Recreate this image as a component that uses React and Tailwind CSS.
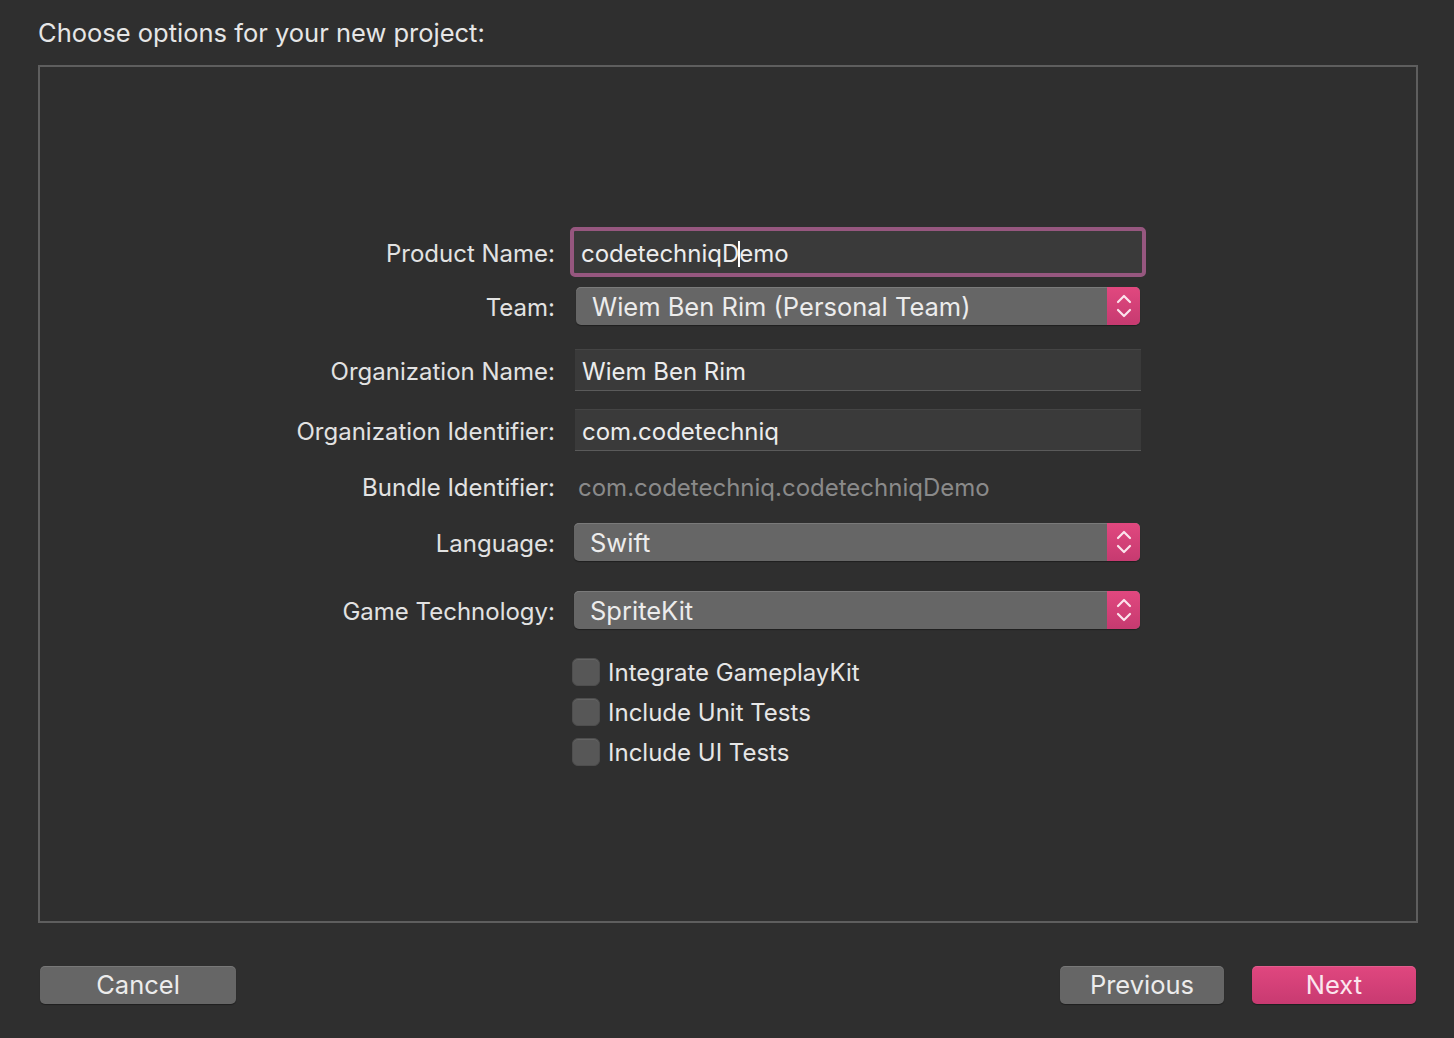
import React from "react";

const Stepper = () => (
    <div className="w-[33px] self-stretch rounded-r-[5px] bg-gradient-to-b from-[#e1487f] to-[#c63a70] flex items-center justify-center">
        <svg width="18" height="30" viewBox="0 0 18 30" fill="none" stroke="#fbe3ec" strokeWidth="2.2" strokeLinecap="round" strokeLinejoin="round">
            <path d="M3 11 L9 5 L15 11" />
            <path d="M3 19 L9 25 L15 19" />
        </svg>
    </div>
);

const Popup = ({ value, width = "w-[566px]" }) => (
    <div className={`flex h-[38px] ${width} rounded-[5px] bg-[#666666] shadow-[inset_0_1px_0_#7a7a7a,0_1px_1px_rgba(0,0,0,0.35)]`}>
        <div className="flex-1 flex items-center pl-[16px] pt-[2px] leading-[30px] text-[25.5px] text-[#ececec]">
            {value}
        </div>
        <Stepper />
    </div>
);

const Field = ({ children }) => (
    <div className="flex items-center h-[42px] w-[566px] bg-[#3a3a3a] border-t border-t-[#444444] border-b border-b-[#5a5a5a] pl-[7px] pt-[3px] leading-[28px] text-[24px] text-[#ececec]">
        {children}
    </div>
);

const Row = ({ label, children, className = "" }) => (
    <div className={`flex items-center ${className}`}>
        <div className="w-[531px] pr-[16px] pt-[3px] leading-[28px] text-right text-[24px] text-[#e2e2e2]">
            {label}
        </div>
        {children}
    </div>
);

const Check = ({ label, className = "" }) => (
    <div className={`flex items-center gap-[8px] pl-[532px] h-[28px] ${className}`}>
        <div className="w-[28px] h-[28px] rounded-[6px] bg-[#575757] border border-[#4e4e4e] shadow-[inset_0_1px_0_#646464]" />
        <span className="text-[24px] leading-[26px] pt-[2px] text-[#e6e6e6]">{label}</span>
    </div>
);

const Button = ({ label, className = "" }) => (
    <button className={`h-[38px] rounded-[5px] text-[25.5px] text-[#ececec] flex items-center justify-center shadow-[inset_0_1px_0_rgba(255,255,255,0.12),0_1px_1px_rgba(0,0,0,0.35)] ${className}`}>
        {label}
    </button>
);

export default function App() {
    return (
        <div className="w-[1454px] h-[1038px] bg-[#2f2f2f] font-['Inter',sans-serif] flex flex-col px-[38px] pt-[18px] overflow-hidden">

            {/* Title */}
            <h1 className="text-[25.5px] leading-[30px] text-[#e6e6e6] h-[47px]">
                Choose options for your new project:
            </h1>

            {/* Options panel */}
            <div className="w-[1380px] h-[858px] border-2 border-[#5e5e5e] flex flex-col pt-[160px]">

                <Row label="Product Name:" className="h-[50px]">
                    <div className="ml-[-1px] h-[50px] w-[576px] rounded-[5px] border-[4px] border-[#96577f] bg-[#3a3a3a] flex items-center pl-[7px] pt-[3px] leading-[28px] text-[24px] text-[#ececec]">
                        codetechniqD
                        <span className="inline-block w-[2px] h-[26px] bg-white mx-[-1px]" />
                        emo
                    </div>
                </Row>

                <Row label="Team:" className="mt-[10px] h-[38px]">
                    <div className="ml-[5px]">
                        <Popup value="Wiem Ben Rim (Personal Team)" width="w-[564px]" />
                    </div>
                </Row>

                <Row label="Organization Name:" className="mt-[24px] h-[42px]">
                    <div className="ml-[4px]">
                        <Field>Wiem Ben Rim</Field>
                    </div>
                </Row>

                <Row label="Organization Identifier:" className="mt-[18px] h-[42px]">
                    <div className="ml-[4px]">
                        <Field>com.codetechniq</Field>
                    </div>
                </Row>

                <Row label="Bundle Identifier:" className="mt-[18px] h-[34px]">
                    <div className="ml-[7px] pt-[3px] leading-[28px] text-[24px] text-[#8a8a8a]">
                        com.codetechniq.codetechniqDemo
                    </div>
                </Row>

                <Row label="Language:" className="mt-[20px] h-[38px]">
                    <div className="ml-[3px]">
                        <Popup value="Swift" />
                    </div>
                </Row>

                <Row label="Game Technology:" className="mt-[30px] h-[38px]">
                    <div className="ml-[3px]">
                        <Popup value="SpriteKit" />
                    </div>
                </Row>

                <Check label="Integrate GameplayKit" className="mt-[29px]" />
                <Check label="Include Unit Tests" className="mt-[12px]" />
                <Check label="Include UI Tests" className="mt-[12px]" />
            </div>

            {/* Footer */}
            <div className="flex items-center mt-[43px] pl-[2px]">
                <Button label="Cancel" className="w-[196px] bg-[#666666]" />
                <div className="flex-1" />
                <Button label="Previous" className="w-[164px] bg-[#666666]" />
                <Button label="Next" className="w-[164px] ml-[28px] bg-gradient-to-b from-[#e0477f] to-[#c83a71] text-[#fbe6ee]" />
            </div>
        </div>
    );
}
